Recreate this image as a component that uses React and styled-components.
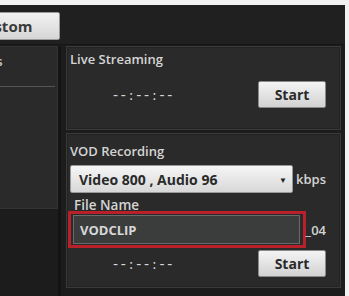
import React from "react";
import styled, { createGlobalStyle } from "styled-components";

const Global = createGlobalStyle`
  html, body { margin: 0; padding: 0; background: #f4f4f4; }
  body { font-family: "Open Sans", "Noto Sans", sans-serif; }
`;

const Frame = styled.div`
  width: 349px;
  height: 296px;
  padding: 5px 4px 0 0;
  box-sizing: border-box;
  background: #f2f2f2;
`;

const Screen = styled.div`
  width: 345px;
  height: 291px;
  background: #1c1c1c;
  overflow: hidden;
  display: flex;
  flex-direction: column;
`;

const TopBar = styled.div`
  height: 40px;
  display: flex;
  align-items: flex-start;
  background: #202020;
  border-bottom: 1px solid #161616;
  box-sizing: border-box;
`;

const Tab = styled.div`
  margin-top: 7px;
  margin-left: -27px;
  width: 87px;
  height: 28px;
  box-sizing: border-box;
  padding-left: 1px;
  display: flex;
  align-items: center;
  font-size: 15px;
  font-weight: 700;
  color: #3a3a3a;
  background: linear-gradient(#f2f2f2, #d6d6d6);
  border: 1px solid #9a9a9a;
  border-radius: 2px;
`;

const Main = styled.div`
  flex: 1;
  display: flex;
  padding-top: 1px;
`;

const LeftCol = styled.div`
  width: 58px;
  display: flex;
  flex-direction: column;
  border-right: 3px solid #141414;
`;

const SidePanel = styled.div`
  height: 163px;
  background: #2a2a2a;
  border: 1px solid #333;
  border-left: none;
  box-sizing: border-box;
  overflow: hidden;
`;

const SideLabel = styled.div`
  height: 40px;
  margin-left: -47px;
  padding-top: 5px;
  box-sizing: border-box;
  font-size: 13px;
  font-weight: 600;
  color: #cfcfcf;
  border-bottom: 1px solid #555;
  margin-right: 2px;
`;

const RightCol = styled.div`
  margin-left: 5px;
  width: 275px;
  display: flex;
  flex-direction: column;
  gap: 3px;
`;

const Panel = styled.div`
  height: ${(p) => p.h}px;
  background: #2a2a2a;
  border: 1px solid #3a3a3a;
  box-shadow: inset 0 0 0 1px #232323;
  box-sizing: border-box;
  padding: ${(p) => p.pt}px 14px 0 3px;
  display: flex;
  flex-direction: column;
`;

const Label = styled.div`
  font-size: 13px;
  font-weight: 600;
  color: #d4d4d4;
  line-height: 16px;
`;

const ActionRow = styled.div`
  display: flex;
  align-items: center;
  justify-content: space-between;
  margin-top: ${(p) => p.mt}px;
`;

const Time = styled.div`
  margin-left: 43px;
  font-size: 14px;
  color: #d8d8d8;
  letter-spacing: 2.8px;
  font-family: "DejaVu Sans", sans-serif;
`;

const Button = styled.div`
  width: 68px;
  height: 27px;
  box-sizing: border-box;
  display: flex;
  align-items: center;
  justify-content: center;
  font-size: 14px;
  font-weight: 700;
  color: #2a2a2a;
  background: linear-gradient(#f4f4f4, #d2d2d2);
  border: 1px solid #8a8a8a;
  border-radius: 2px;
`;

const SelectRow = styled.div`
  display: flex;
  align-items: center;
  gap: 3px;
  margin-top: 6px;
`;

const Select = styled.div`
  width: 231px;
  height: 28px;
  box-sizing: border-box;
  padding: 0 5px 0 8px;
  display: flex;
  align-items: center;
  justify-content: space-between;
  font-size: 14px;
  font-weight: 700;
  color: #2a2a2a;
  background: linear-gradient(#f6f6f6, #d8d8d8);
  border: 1px solid #999;
  border-radius: 2px;
`;

const Arrow = styled.span`
  font-size: 8px;
  color: #222;
`;

const Unit = styled.span`
  font-size: 13px;
  font-weight: 600;
  color: #d4d4d4;
`;

const FileLabel = styled(Label)`
  margin-top: 6px;
  margin-left: 4px;
  line-height: 13px;
  font-size: 13.5px;
`;

const FileRow = styled.div`
  display: flex;
  align-items: flex-end;
  margin-top: -1px;
  margin-left: -2px;
`;

const Highlight = styled.div`
  width: 240px;
  height: 37px;
  box-sizing: border-box;
  border: 3px solid #b8202a;
  padding: 1px 3px 1px 2px;
  display: flex;
`;

const Input = styled.div`
  flex: 1;
  box-sizing: border-box;
  background: #3b3d3c;
  border: 1px solid #6a6a6a;
  display: flex;
  align-items: center;
  padding-left: 6px;
  font-size: 13px;
  font-weight: 700;
  color: #d8d8d8;
`;

const Suffix = styled.span`
  font-size: 13px;
  font-weight: 600;
  color: #d4d4d4;
  margin-bottom: 9px;
`;

const Bottom = styled.div`
  flex: 1;
`;

export default function App() {
  return (
    <>
      <Global />
      <Frame>
        <Screen>
          <TopBar>
            <Tab>Custom</Tab>
          </TopBar>
          <Main>
            <LeftCol>
              <SidePanel>
                <SideLabel>Options</SideLabel>
              </SidePanel>
              <Bottom />
            </LeftCol>
            <RightCol>
              <Panel h={84} pt={4}>
                <Label>Live Streaming</Label>
                <ActionRow mt={14}>
                  <Time>--:--:--</Time>
                  <Button>Start</Button>
                </ActionRow>
              </Panel>
              <Panel h={155} pt={9}>
                <Label>VOD Recording</Label>
                <SelectRow>
                  <Select>
                    <span>Video 800 , Audio 96</span>
                    <Arrow>▼</Arrow>
                  </Select>
                  <Unit>kbps</Unit>
                </SelectRow>
                <FileLabel>File Name</FileLabel>
                <FileRow>
                  <Highlight>
                    <Input>VODCLIP</Input>
                  </Highlight>
                  <Suffix>_04</Suffix>
                </FileRow>
                <ActionRow mt={2}>
                  <Time>--:--:--</Time>
                  <Button>Start</Button>
                </ActionRow>
              </Panel>
            </RightCol>
          </Main>
        </Screen>
      </Frame>
    </>
  );
}
